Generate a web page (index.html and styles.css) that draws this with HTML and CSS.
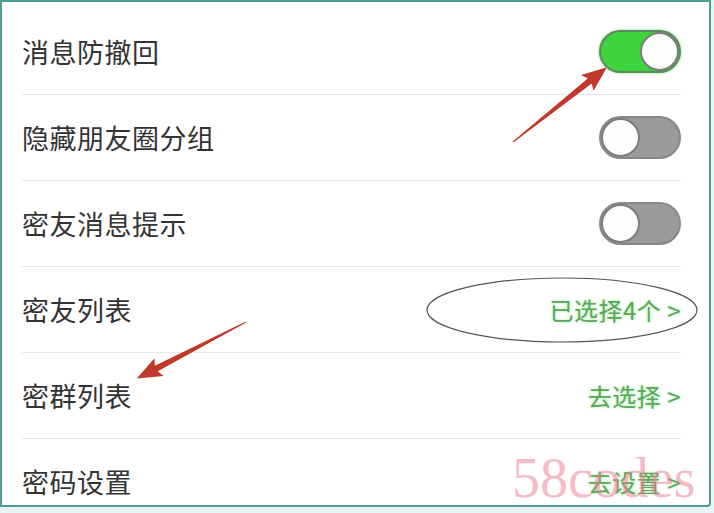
FILE: index.html
```html
<!DOCTYPE html>
<html lang="zh">
<head>
<meta charset="utf-8">
<link rel="stylesheet" href="styles.css">
</head>
<body>
<div class="card">
  <div class="list">
    <div class="row"><span class="label">消息防撤回</span><span class="toggle on"><span class="knob"></span></span></div>
    <div class="row"><span class="label">隐藏朋友圈分组</span><span class="toggle off"><span class="knob"></span></span></div>
    <div class="row"><span class="label">密友消息提示</span><span class="toggle off"><span class="knob"></span></span></div>
    <div class="row"><span class="label">密友列表</span><span class="value">已选择4个 &gt;</span></div>
    <div class="row"><span class="label">密群列表</span><span class="value">去选择 &gt;</span></div>
    <div class="row"><span class="label">密码设置</span><span class="value">去设置 &gt;</span></div>
  </div>
  <svg class="marks" width="714" height="513" viewBox="0 0 714 513">
    <ellipse cx="562" cy="310" rx="135" ry="32" fill="none" stroke="#555" stroke-width="1.2"/>
    <g transform="translate(513 142) rotate(-38.5)">
      <polygon points="0,-0.5 98,-3.2 95,-10 120,0 95,10 98,3.2 0,0.5" fill="#c0392b"/>
    </g>
    <g transform="translate(246 322) rotate(152.6)">
      <polygon points="0,-0.5 101,-3.2 98,-10 123,0 98,10 101,3.2 0,0.5" fill="#c0392b"/>
    </g>
  </svg>
  <div class="watermark">58codes</div>
</div>
</body>
</html>
```
FILE: styles.css
```css
html, body {
  margin: 0;
  padding: 0;
  background: #e8f7f6;
}
.card {
  position: relative;
  width: 707px;
  height: 503px;
  border: 2px solid #4f9a94;
  border-radius: 0 0 4px 0;
  background: #ffffff;
  overflow: hidden;
  font-family: "Noto Sans CJK SC", "Noto Sans", sans-serif;
}
.list {
  padding: 7px 28px 0 20px;
}
.row {
  box-sizing: border-box;
  height: 86px;
  display: flex;
  align-items: center;
  justify-content: space-between;
  border-bottom: 1px solid #e8e8e8;
}
.label {
  font-size: 27px;
  color: #333;
  letter-spacing: 0.5px;
}
.value {
  font-size: 24px;
  letter-spacing: 0.5px;
  color: #5aa65a;
  text-shadow: 0 0 3px rgba(110, 230, 110, 0.7);
}
.toggle {
  box-sizing: border-box;
  width: 82px;
  height: 43px;
  border-radius: 22px;
  border: 2px solid #7b7b7b;
  display: flex;
  align-items: center;
}
.toggle.on {
  background: #3ed43e;
  border-color: #5f8a5f;
  justify-content: flex-end;
  box-shadow: 0 0 3px rgba(80, 230, 80, 0.8);
}
.toggle.off {
  background: #9a9a9a;
  border-color: #888;
  justify-content: flex-start;
}
.knob {
  box-sizing: border-box;
  width: 39px;
  height: 39px;
  border-radius: 50%;
  background: #fdfdfd;
  border: 2px solid #7d7d7d;
}
.marks {
  position: absolute;
  left: -2px;
  top: -2px;
  pointer-events: none;
}
.watermark {
  position: absolute;
  left: 510px;
  top: 448px;
  font-family: "Liberation Serif", serif;
  font-size: 56px;
  line-height: 56px;
  color: rgba(240, 120, 145, 0.5);
}
```
